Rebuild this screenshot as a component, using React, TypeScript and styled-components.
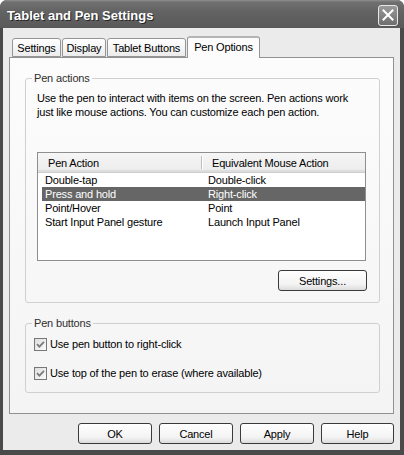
import React from "react";
import styled, { createGlobalStyle } from "styled-components";

const Global = createGlobalStyle`
  html, body { margin: 0; padding: 0; background: #ffffff; }
  body { font-family: "Liberation Sans", Arial, sans-serif; font-size: 11px; letter-spacing: -0.17px; color: #000; }
  * { box-sizing: border-box; }
`;

const Window = styled.div`
  width: 404px;
  height: 455px;
  display: flex;
  flex-direction: column;
  background: #4a4a4a;
  border-radius: 7px 7px 0 0;
  overflow: hidden;
`;

const TitleBar = styled.div`
  height: 28px;
  flex: none;
  display: flex;
  align-items: center;
  justify-content: space-between;
  padding: 0 6px 0 7px;
  background: linear-gradient(#909090 0, #707070 2px, #636363 40%, #595959 100%);
`;

const Title = styled.div`
  font-family: "Liberation Sans", Arial, sans-serif;
  font-weight: bold;
  font-size: 13px;
  letter-spacing: 0;
  color: #ffffff;
  text-shadow: 1px 1px 0 #262626;
  padding-top: 2px;
`;

const CloseButton = styled.div`
  width: 20px;
  height: 21px;
  margin-top: 2px;
  border: 1px solid #e8e8e8;
  border-radius: 3px;
  background: linear-gradient(#9a9a9a, #6e6e6e);
  display: flex;
  align-items: center;
  justify-content: center;
`;

const Client = styled.div`
  flex: 1;
  margin: 0 4px 5px 3px;
  background: #ebebeb;
  display: flex;
  flex-direction: column;
  padding: 8px 6px 6px 6px;
`;

const TabStrip = styled.div`
  height: 21px;
  display: flex;
  align-items: flex-end;
  gap: 1px;
  padding-left: 3px;
  position: relative;
  z-index: 1;
`;

const Tab = styled.div<{ $active?: boolean; $w: number }>`
  width: ${(p) => p.$w}px;
  height: ${(p) => (p.$active ? "22px" : "19px")};
  margin-bottom: ${(p) => (p.$active ? "-1px" : "0")};
  padding-bottom: ${(p) => (p.$active ? "2px" : "0")};
  display: flex;
  align-items: center;
  justify-content: center;
  border: 1px solid #959595;
  border-bottom: ${(p) => (p.$active ? "none" : "1px solid #959595")};
  border-top: ${(p) => (p.$active ? "2px solid #b4b4b4" : "1px solid #959595")};
  border-radius: 3px 3px 0 0;
  background: ${(p) => (p.$active ? "#fcfcfc" : "linear-gradient(#ffffff, #ececec)")};
  white-space: nowrap;
`;

const Panel = styled.div`
  height: 357px;
  flex: none;
  border: 1px solid #919191;
  background: linear-gradient(#fcfcfc, #f4f4f4);
  display: flex;
  flex-direction: column;
  padding: 13px 13px 0 15px;
`;

const Group = styled.fieldset<{ $gap?: number }>`
  margin: ${(p) => p.$gap ?? 0}px 0 0 0;
  padding: 0;
  border: 1px solid #d0d0d0;
  border-radius: 3px;
  min-width: 0;
`;

const Legend = styled.legend`
  margin-left: 6px;
  padding: 0 2px;
  line-height: 14px;
  color: #2e2e2e;
`;

const GroupBody = styled.div<{ $pad: string }>`
  display: flex;
  flex-direction: column;
  padding: ${(p) => p.$pad};
`;

const Description = styled.p`
  margin: 0;
  max-width: 322px;
  line-height: 14px;
`;

const ListView = styled.div`
  margin-top: 33px;
  width: 329px;
  height: 109px;
  border: 1px solid #8e8e8e;
  background: #ffffff;
  display: flex;
  flex-direction: column;
`;

const ListHeader = styled.div`
  height: 20px;
  flex: none;
  display: flex;
  align-items: center;
  background: linear-gradient(#f6f6f6, #ebebeb);
  border-bottom: 1px solid #cdcdcd;
  box-shadow: 0 -2px 0 #dddddd inset;
`;

const HeaderCell = styled.div<{ $w?: number }>`
  width: ${(p) => (p.$w ? `${p.$w}px` : "auto")};
  flex: ${(p) => (p.$w ? "none" : "1")};
  padding-left: 10px;
  white-space: nowrap;
`;

const HeaderDivider = styled.div`
  width: 1px;
  height: 13px;
  background: #bdbdbd;
  box-shadow: 1px 0 0 #ffffff;
`;

const Row = styled.div<{ $selected?: boolean }>`
  height: 14px;
  margin-left: 4px;
  display: flex;
  align-items: center;
  line-height: 14px;
  background: ${(p) => (p.$selected ? "#666666" : "transparent")};
  color: ${(p) => (p.$selected ? "#ffffff" : "#000000")};
  &:first-of-type {
    margin-top: 1px;
  }
`;

const Cell = styled.div<{ $w?: number; $pl: number }>`
  width: ${(p) => (p.$w ? `${p.$w}px` : "auto")};
  flex: ${(p) => (p.$w ? "none" : "1")};
  padding-left: ${(p) => p.$pl}px;
  white-space: nowrap;
`;

const Button = styled.div<{ $w: number }>`
  width: ${(p) => p.$w}px;
  height: 21px;
  flex: none;
  border: 1px solid #3a3a3a;
  border-radius: 3px;
  background: linear-gradient(#ffffff 0%, #f3f3f3 70%, #dcdcdc 100%);
  display: flex;
  align-items: center;
  justify-content: center;
  white-space: nowrap;
`;

const SettingsButton = styled(Button)`
  margin-top: 9px;
  align-self: flex-end;
`;

const CheckRow = styled.label`
  height: 16px;
  display: flex;
  align-items: center;
  gap: 3px;
  white-space: nowrap;
`;

const CheckBox = styled.span`
  width: 13px;
  height: 13px;
  flex: none;
  border: 1px solid #777777;
  background: linear-gradient(135deg, #dedede, #fbfbfb);
  display: flex;
  align-items: center;
  justify-content: center;
`;

const CheckList = styled.div`
  display: flex;
  flex-direction: column;
  gap: 13px;
`;

const ButtonRow = styled.div`
  margin-top: 9px;
  display: flex;
  justify-content: flex-end;
  gap: 7px;
`;

const rows = [
  ["Double-tap", "Double-click"],
  ["Press and hold", "Right-click"],
  ["Point/Hover", "Point"],
  ["Start Input Panel gesture", "Launch Input Panel"],
];

const Check = () => (
  <CheckBox>
    <svg width="9" height="9" viewBox="0 0 9 9">
      <path d="M1 4.2 L3.4 6.6 L8 1.8" fill="none" stroke="#7c7c7c" strokeWidth="1.8" />
    </svg>
  </CheckBox>
);

export default function App() {
  return (
    <>
      <Global />
      <Window>
        <TitleBar>
          <Title>Tablet and Pen Settings</Title>
          <CloseButton>
            <svg width="12" height="12" viewBox="0 0 12 12">
              <path d="M1.5 1.5 L10.5 10.5 M10.5 1.5 L1.5 10.5" stroke="#ffffff" strokeWidth="2" strokeLinecap="square" />
            </svg>
          </CloseButton>
        </TitleBar>
        <Client>
          <TabStrip>
            <Tab $w={49}>Settings</Tab>
            <Tab $w={44}>Display</Tab>
            <Tab $w={79}>Tablet Buttons</Tab>
            <Tab $w={73} $active>
              Pen Options
            </Tab>
          </TabStrip>
          <Panel>
            <Group>
              <Legend>Pen actions</Legend>
              <GroupBody $pad="6px 12px 11px 11px">
                <Description>
                  Use the pen to interact with items on the screen. Pen actions work just like mouse actions. You can
                  customize each pen action.
                </Description>
                <ListView>
                  <ListHeader>
                    <HeaderCell $w={163}>Pen Action</HeaderCell>
                    <HeaderDivider />
                    <HeaderCell>Equivalent Mouse Action</HeaderCell>
                  </ListHeader>
                  {rows.map(([a, b], i) => (
                    <Row key={a} $selected={i === 1}>
                      <Cell $w={159} $pl={3}>
                        {a}
                      </Cell>
                      <Cell $pl={7}>{b}</Cell>
                    </Row>
                  ))}
                </ListView>
                <SettingsButton $w={89}>Settings...</SettingsButton>
              </GroupBody>
            </Group>
            <Group $gap={13}>
              <Legend>Pen buttons</Legend>
              <GroupBody $pad="6px 8px 11px 8px">
                <CheckList>
                  <CheckRow>
                    <Check />
                    Use pen button to right-click
                  </CheckRow>
                  <CheckRow>
                    <Check />
                    Use top of the pen to erase (where available)
                  </CheckRow>
                </CheckList>
              </GroupBody>
            </Group>
          </Panel>
          <ButtonRow>
            <Button $w={74}>OK</Button>
            <Button $w={74}>Cancel</Button>
            <Button $w={74}>Apply</Button>
            <Button $w={73}>Help</Button>
          </ButtonRow>
        </Client>
      </Window>
    </>
  );
}
